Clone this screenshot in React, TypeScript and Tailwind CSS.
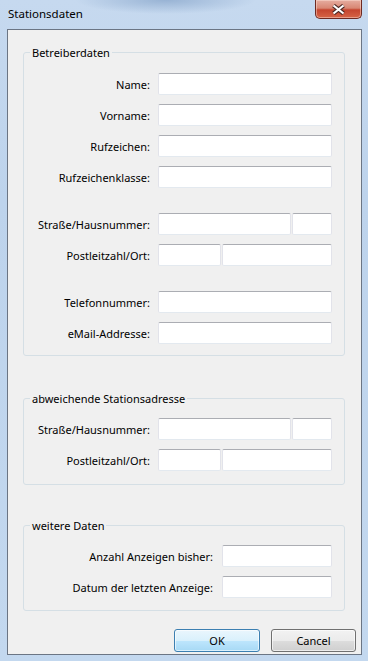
import React from "react";

function Box({ w }: { w: string }) {
  return (
    <div
      className={`h-[22px] ${w} bg-white border border-[#e2e3ea] border-t-[#abadb3] border-b-[#e3e9ef] rounded-[2px] shrink-0`}
    />
  );
}

function Row({
  label,
  labelW = "w-[126px]",
  gap = "ml-[8px]",
  children,
  className = "",
}: {
  label: string;
  labelW?: string;
  gap?: string;
  children: React.ReactNode;
  className?: string;
}) {
  return (
    <div className={`flex items-center ${className}`}>
      <span className={`${labelW} text-right whitespace-nowrap leading-[15px]`}>{label}</span>
      <div className={`flex gap-[1px] ${gap}`}>{children}</div>
    </div>
  );
}

function Group({
  title,
  className = "",
  children,
}: {
  title: string;
  className?: string;
  children: React.ReactNode;
}) {
  return (
    <fieldset
      className={`border border-[#d5dfe5] rounded-[3px] min-w-0 ml-[15px] mr-[16px] ${className}`}
    >
      <legend className="ml-[6px] px-[2px] leading-[15px]">{title}</legend>
      {children}
    </fieldset>
  );
}

export default function App() {
  return (
    <div className="w-[368px] h-[661px] flex flex-col overflow-hidden text-[11px] text-black font-['Segoe_UI','Noto_Sans',sans-serif] bg-[linear-gradient(180deg,#c6d9ef_0%,#bdd3ec_30%,#c3d8ef_100%)]">
      <div className="h-[29px] flex justify-between items-start shrink-0 bg-[radial-gradient(ellipse_90px_14px_at_45%_0%,#98b3d4_0%,rgba(152,179,212,0)_100%)]">
        <span className="ml-[8px] mt-[6px] leading-[16px] text-[11.5px]">Stationsdaten</span>
        <div className="mr-[6px] w-[47px] h-[19px] rounded-b-[5px] border border-t-0 border-[#6e2a22] bg-[linear-gradient(180deg,#e6ada0_0%,#d88774_45%,#c5452f_55%,#d66446_100%)] shadow-[inset_0_0_0_1px_rgba(255,230,220,0.45)] flex items-center justify-center">
          <svg width="15" height="11" viewBox="0 0 15 11">
            <path d="M2.5 1.5 L12.5 9.5 M12.5 1.5 L2.5 9.5" stroke="#4b2924" strokeWidth="4.2" />
            <path d="M2.5 1.5 L12.5 9.5 M12.5 1.5 L2.5 9.5" stroke="#ffffff" strokeWidth="2.2" />
          </svg>
        </div>
      </div>

      <div className="ml-[7px] mr-[6px] mb-[6px] flex-1 border border-[#6b7584] bg-[#f0f0f0] flex flex-col">
        <Group title="Betreiberdaten" className="mt-[15px]">
          <div className="flex flex-col pt-[13px] pb-[11px]">
            <Row label="Name:">
              <Box w="w-[174px]" />
            </Row>
            <Row label="Vorname:" className="mt-[9px]">
              <Box w="w-[174px]" />
            </Row>
            <Row label="Rufzeichen:" className="mt-[9px]">
              <Box w="w-[174px]" />
            </Row>
            <Row label="Rufzeichenklasse:" className="mt-[9px]">
              <Box w="w-[174px]" />
            </Row>
            <Row label="Straße/Hausnummer:" className="mt-[25px]">
              <Box w="w-[133px]" />
              <Box w="w-[40px]" />
            </Row>
            <Row label="Postleitzahl/Ort:" className="mt-[9px]">
              <Box w="w-[63px]" />
              <Box w="w-[110px]" />
            </Row>
            <Row label="Telefonnummer:" className="mt-[25px]">
              <Box w="w-[174px]" />
            </Row>
            <Row label="eMail-Addresse:" className="mt-[9px]">
              <Box w="w-[174px]" />
            </Row>
          </div>
        </Group>

        <Group title="abweichende Stationsadresse" className="mt-[35px]">
          <div className="flex flex-col pt-[12px] pb-[13px]">
            <Row label="Straße/Hausnummer:">
              <Box w="w-[133px]" />
              <Box w="w-[40px]" />
            </Row>
            <Row label="Postleitzahl/Ort:" className="mt-[9px]">
              <Box w="w-[63px]" />
              <Box w="w-[110px]" />
            </Row>
          </div>
        </Group>

        <Group title="weitere Daten" className="mt-[33px]">
          <div className="flex flex-col pt-[12px] pb-[12px]">
            <Row label="Anzahl Anzeigen bisher:" labelW="w-[189px]" gap="ml-[9px]">
              <Box w="w-[110px]" />
            </Row>
            <Row label="Datum der letzten Anzeige:" labelW="w-[189px]" gap="ml-[9px]" className="mt-[9px]">
              <Box w="w-[110px]" />
            </Row>
          </div>
        </Group>

        <div className="flex justify-end gap-[11px] mt-[18px] pr-[5px]">
          <button className="w-[86px] h-[23px] rounded-[3px] border border-[#3c7fb1] bg-[linear-gradient(180deg,#eaf6fd_0%,#d9f0fc_50%,#bee6fd_51%,#a7d9f5_100%)] shadow-[inset_0_0_0_1px_rgba(255,255,255,0.6)] leading-[15px]">
            OK
          </button>
          <button className="w-[85px] h-[23px] rounded-[3px] border border-[#707070] bg-[linear-gradient(180deg,#f2f2f2_0%,#ebebeb_50%,#dddddd_51%,#cfcfcf_100%)] shadow-[inset_0_0_0_1px_rgba(255,255,255,0.6)] leading-[15px]">
            Cancel
          </button>
        </div>
      </div>
    </div>
  );
}
